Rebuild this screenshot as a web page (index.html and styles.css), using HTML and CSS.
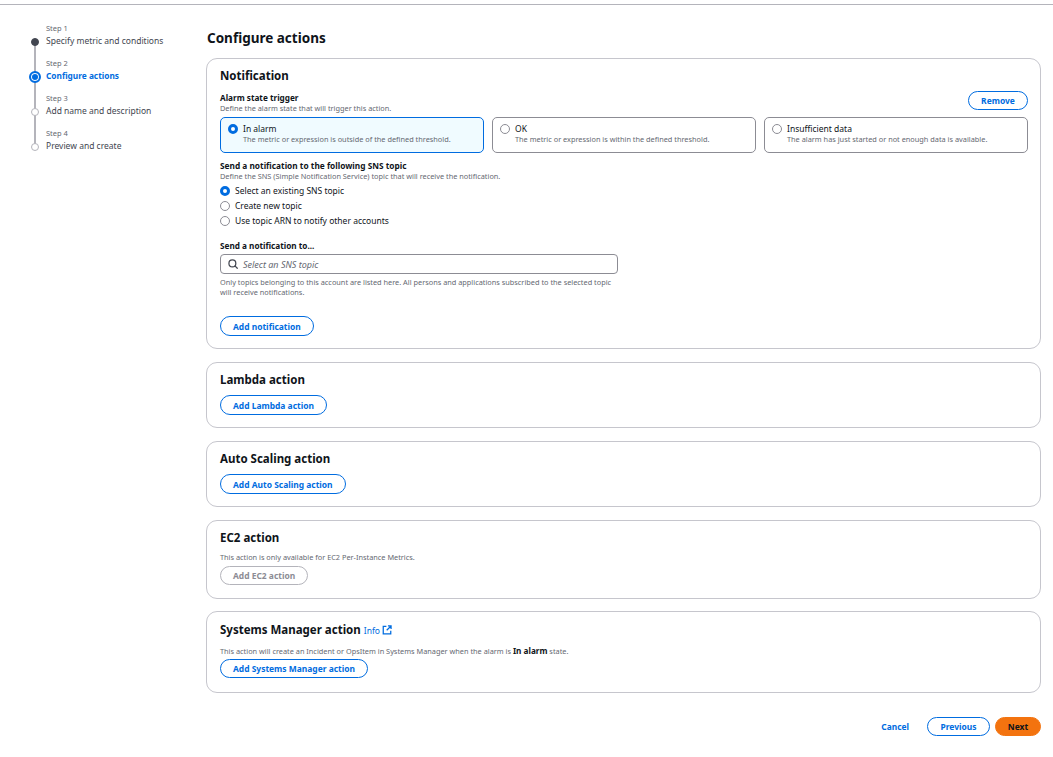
FILE: index.html
```html
<!DOCTYPE html>
<html lang="en">
<head>
    <meta charset="UTF-8">
    <title>Configure actions</title>
    <link rel="stylesheet" href="styles.css">
</head>
<body>
    <div class="top-line"></div>
    <div class="page">
        <ul class="steps">
            <li class="step step-done">
                <span class="step-label">Step 1</span>
                <span class="step-name">Specify metric and conditions</span>
            </li>
            <li class="step step-current">
                <span class="step-label">Step 2</span>
                <span class="step-name">Configure actions</span>
            </li>
            <li class="step">
                <span class="step-label">Step 3</span>
                <span class="step-name">Add name and description</span>
            </li>
            <li class="step">
                <span class="step-label">Step 4</span>
                <span class="step-name">Preview and create</span>
            </li>
        </ul>

        <main class="content">
            <h1 class="page-title">Configure actions</h1>

            <section class="card">
                <h2 class="card-title">Notification</h2>
                <div class="trigger-head">
                    <div>
                        <div class="field-label">Alarm state trigger</div>
                        <div class="hint">Define the alarm state that will trigger this action.</div>
                    </div>
                    <button class="btn btn-small">Remove</button>
                </div>
                <div class="tiles">
                    <div class="tile tile-selected">
                        <span class="radio radio-on"></span>
                        <div>
                            <div class="tile-name">In alarm</div>
                            <div class="hint">The metric or expression is outside of the defined threshold.</div>
                        </div>
                    </div>
                    <div class="tile">
                        <span class="radio"></span>
                        <div>
                            <div class="tile-name">OK</div>
                            <div class="hint">The metric or expression is within the defined threshold.</div>
                        </div>
                    </div>
                    <div class="tile">
                        <span class="radio"></span>
                        <div>
                            <div class="tile-name">Insufficient data</div>
                            <div class="hint">The alarm has just started or not enough data is available.</div>
                        </div>
                    </div>
                </div>

                <div class="field-label sns-label">Send a notification to the following SNS topic</div>
                <div class="hint">Define the SNS (Simple Notification Service) topic that will receive the notification.</div>
                <div class="radio-group">
                    <label class="radio-row"><span class="radio radio-on"></span>Select an existing SNS topic</label>
                    <label class="radio-row"><span class="radio"></span>Create new topic</label>
                    <label class="radio-row"><span class="radio"></span>Use topic ARN to notify other accounts</label>
                </div>

                <div class="field-label send-label">Send a notification to...</div>
                <div class="search">
                    <svg class="search-icon" width="10" height="10" viewBox="0 0 16 16" fill="none" stroke="#424650" stroke-width="2">
                        <circle cx="7" cy="7" r="5.5"></circle>
                        <path d="M11 11l4.5 4.5"></path>
                    </svg>
                    <span>Select an SNS topic</span>
                </div>
                <div class="hint search-hint">Only topics belonging to this account are listed here. All persons and applications subscribed to the selected topic will receive notifications.</div>
                <button class="btn btn-add-notification">Add notification</button>
            </section>

            <section class="card">
                <h2 class="card-title">Lambda action</h2>
                <button class="btn">Add Lambda action</button>
            </section>

            <section class="card">
                <h2 class="card-title">Auto Scaling action</h2>
                <button class="btn">Add Auto Scaling action</button>
            </section>

            <section class="card card-ec2">
                <h2 class="card-title">EC2 action</h2>
                <div class="hint card-hint">This action is only available for EC2 Per-Instance Metrics.</div>
                <button class="btn btn-compact btn-disabled">Add EC2 action</button>
            </section>

            <section class="card card-systems">
                <h2 class="card-title">Systems Manager action
                    <span class="info">Info
                        <svg width="10" height="10" viewBox="0 0 16 16" fill="none" stroke="#006ce0" stroke-width="2">
                            <path d="M7 2H2v12h12V9"></path>
                            <path d="M9.500 1.500h5v5M14.500 1.500L7.500 8.500"></path>
                        </svg>
                    </span>
                </h2>
                <div class="hint card-hint">This action will create an Incident or OpsItem in Systems Manager when the alarm is <b class="hint-strong">In alarm</b> state.</div>
                <button class="btn btn-compact">Add Systems Manager action</button>
            </section>

            <div class="footer">
                <a class="cancel">Cancel</a>
                <button class="btn btn-compact btn-previous">Previous</button>
                <button class="btn btn-compact btn-primary">Next</button>
            </div>
        </main>
    </div>
</body>
</html>
```

FILE: styles.css
```css
body {
    margin: 0;
    font-family: "Noto Sans", Arial, sans-serif;
    font-size: 8.5px;
    color: #0f141a;
    background-color: #fff;
}
.top-line {
    height: 1px;
    margin-top: 4px;
    background-color: #b4b4bb;
}
.page {
    display: flex;
    padding: 0 12px 0 30px;
}

/* left wizard nav */
.steps {
    list-style: none;
    width: 176px;
    flex-shrink: 0;
    margin: 0;
    padding: 18px 0 0;
}
.step {
    position: relative;
    height: 35px;
    padding-left: 16px;
    color: #424650;
}
.step-label {
    display: block;
    font-size: 7.5px;
    line-height: 11px;
    color: #656871;
}
.step-name {
    display: block;
    font-size: 8.5px;
    line-height: 14px;
}
.step::before {
    content: "";
    position: absolute;
    left: 1px;
    top: 15px;
    width: 6px;
    height: 6px;
    border: 1px solid #b4b4bb;
    border-radius: 50%;
    background-color: #fff;
    z-index: 1;
}
.step::after {
    content: "";
    position: absolute;
    left: 4px;
    top: 20px;
    width: 2px;
    height: 35px;
    background-color: #b4b4bb;
}
.step:last-child::after {
    display: none;
}
.step-done::before {
    background-color: #424650;
    border-color: #424650;
}
.step-current .step-name {
    color: #006ce0;
    font-size: 8.3px;
    font-weight: 700;
}
.step-current::before {
    left: -1px;
    top: 13px;
    width: 8px;
    height: 8px;
    border: 2px solid #006ce0;
    box-shadow: inset 0 0 0 1px #fff, inset 0 0 0 4px #006ce0;
}

/* main column */
.content {
    flex: 1;
}
.page-title {
    margin: 0;
    padding: 24px 0 10px 1px;
    font-size: 13.5px;
    line-height: 19px;
    font-weight: 700;
}
.card {
    border: 1px solid #c6c6cd;
    border-radius: 11px;
    padding: 8px 12px 12px 13px;
    margin-bottom: 13px;
}
.card-title {
    margin: 0 0 7px;
    font-size: 11.5px;
    line-height: 17px;
    font-weight: 700;
}
.card-ec2 {
    padding-bottom: 13px;
    margin-bottom: 12px;
}
.card-systems {
    padding-top: 9px;
    padding-bottom: 14px;
}
.card-ec2 .card-title {
    margin-bottom: 6px;
}
.card-systems .card-hint {
    margin-bottom: 3px;
}
.field-label {
    font-size: 8.2px;
    line-height: 10px;
    font-weight: 700;
}
.hint {
    font-size: 7.35px;
    line-height: 10px;
    color: #656871;
}
.hint-strong {
    font-size: 8.2px;
    color: #0f141a;
}
.card-hint {
    margin: 0 0 4px;
}

.trigger-head {
    display: flex;
    justify-content: space-between;
    align-items: flex-end;
    margin: 1px 0 4px;
}
.tiles {
    display: grid;
    grid-template-columns: repeat(3, 1fr);
    gap: 8px;
}
.tile {
    display: flex;
    gap: 5px;
    height: 36px;
    box-sizing: border-box;
    padding: 5px 7px;
    border: 1px solid #8c8c94;
    border-radius: 5px;
}
.tile-selected {
    border-color: #006ce0;
    background-color: #f0fbff;
}
.tile-name {
    font-size: 8.5px;
    line-height: 11px;
}
.radio {
    display: block;
    flex-shrink: 0;
    box-sizing: border-box;
    width: 10px;
    height: 10px;
    margin-top: 1px;
    border: 1px solid #8c8c94;
    border-radius: 50%;
    background-color: #fff;
}
.radio-on {
    border: 3px solid #006ce0;
}
.sns-label {
    margin-top: 8px;
    font-size: 8.3px;
}
.radio-group {
    margin-top: 2px;
}
.radio-row {
    display: flex;
    align-items: center;
    gap: 5px;
    height: 15px;
    font-size: 8.5px;
}
.radio-row .radio {
    margin-top: 0;
}
.send-label {
    margin-top: 13px;
}
.search {
    display: flex;
    align-items: center;
    gap: 5px;
    box-sizing: border-box;
    width: 398px;
    height: 20px;
    margin-top: 3px;
    padding: 0 7px;
    border: 1px solid #8c8c94;
    border-radius: 4px;
    font-size: 9px;
    font-style: italic;
    color: #656871;
}
.search-hint {
    width: 398px;
    margin-top: 3px;
}
.btn {
    display: block;
    box-sizing: border-box;
    height: 20px;
    padding: 0 12px;
    border: 1px solid #006ce0;
    border-radius: 10px;
    background-color: #fff;
    color: #006ce0;
    font-family: inherit;
    font-size: 8.45px;
    font-weight: 700;
}
.btn-compact {
    height: 19px;
}
.btn-small {
    height: 19px;
    width: 60px;
    padding: 0;
    margin-bottom: 3px;
}
.btn-add-notification {
    margin-top: 19px;
}
.btn-disabled {
    border-color: #b4b4bb;
    color: #8c8c94;
}
.info {
    font-size: 8.5px;
    font-weight: 400;
    color: #006ce0;
}
.info svg {
    vertical-align: -1px;
}
.footer {
    display: flex;
    justify-content: flex-end;
    align-items: center;
    gap: 5px;
    margin-top: 24px;
}
.cancel {
    margin-right: 13px;
    font-size: 8.4px;
    font-weight: 700;
    color: #006ce0;
}
.btn-previous {
    width: 63px;
    padding: 0;
}
.btn-primary {
    width: 46px;
    padding: 0;
    border-color: #f3730f;
    background-color: #f3730f;
    color: #0f141a;
}
```
